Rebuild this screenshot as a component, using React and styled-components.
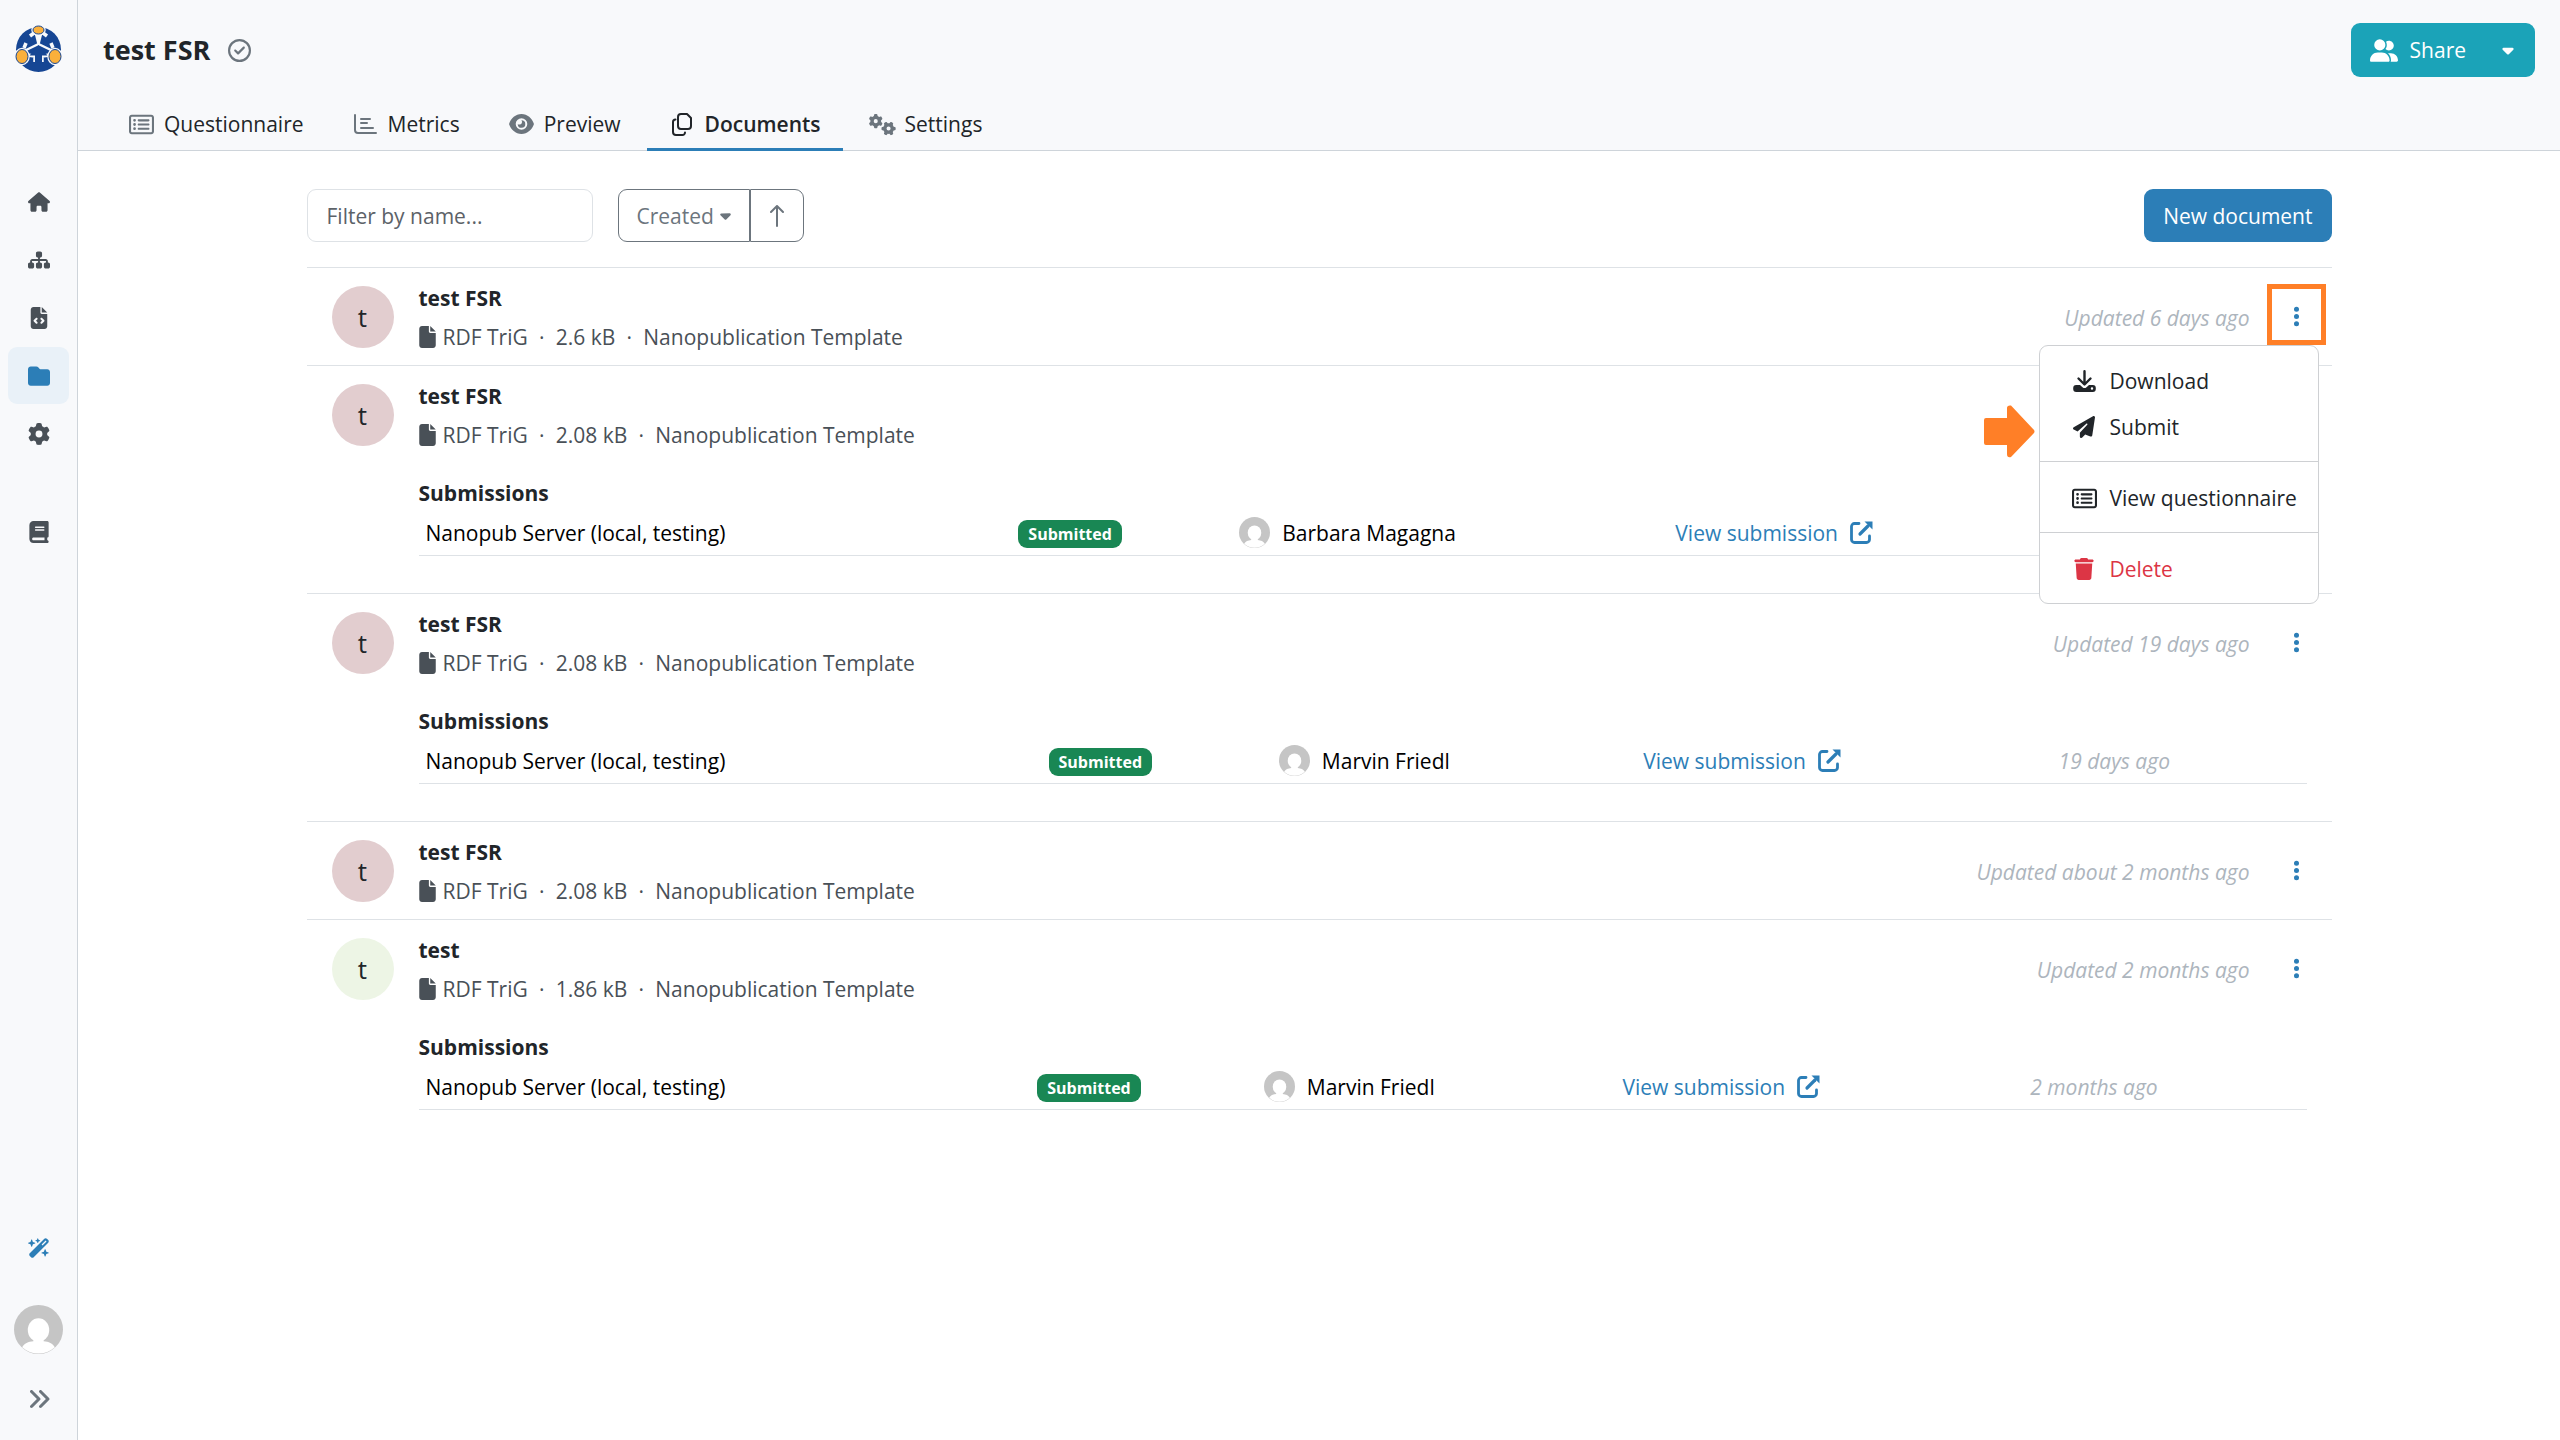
import React, { Component } from 'react';
import styled, { createGlobalStyle, css } from 'styled-components';
import {
  FaHouse,
  FaSitemap,
  FaFileCode,
  FaFolder,
  FaGear,
  FaBook,
  FaWandMagicSparkles,
  FaAnglesRight,
  FaRegCircleCheck,
  FaRegRectangleList,
  FaGears,
  FaUserGroup,
  FaCaretDown,
  FaFile,
  FaEllipsisVertical,
  FaPaperPlane,
  FaTrash,
} from 'react-icons/fa6';

const navItems = [
  { label: 'Dashboard', icon: FaHouse },
  { label: 'Knowledge models', icon: FaSitemap },
  { label: 'Document templates', icon: FaFileCode },
  { label: 'Projects', icon: FaFolder, active: true },
  { label: 'Administration', icon: FaGear },
];

const documents = [
  { name: 'test FSR', size: '2.6 kB', updated: 'Updated 6 days ago', color: '#e2cdcf' },
  {
    name: 'test FSR',
    size: '2.08 kB',
    updated: '',
    color: '#e2cdcf',
    submission: { user: 'Barbara Magagna', date: '', columns: [31.4, 11.7, 23.1, 20] },
  },
  {
    name: 'test FSR',
    size: '2.08 kB',
    updated: 'Updated 19 days ago',
    color: '#e2cdcf',
    submission: { user: 'Marvin Friedl', date: '19 days ago', columns: [33, 12.2, 19.3, 22] },
  },
  { name: 'test FSR', size: '2.08 kB', updated: 'Updated about 2 months ago', color: '#e2cdcf' },
  {
    name: 'test',
    size: '1.86 kB',
    updated: 'Updated 2 months ago',
    color: '#edf5e5',
    submission: { user: 'Marvin Friedl', date: '2 months ago', columns: [32.4, 12, 19, 21.6] },
  },
];

/* icons that the icon set draws differently */
const ChartIcon = () => (
  <svg width="23" height="20" viewBox="0 0 23 20" fill="none" stroke="currentColor" strokeWidth="2" strokeLinecap="round">
    <path d="M1 1v15a3 3 0 0 0 3 3h18M7 5h9M7 9h6M7 14h12" />
  </svg>
);

const EyeIcon = () => (
  <svg width="25" height="20" viewBox="0 0 25 20">
    <path fill="currentColor" fillRule="evenodd" d="M12.500 0C6.500 0 2 4.500 0.300 9.200a2 2 0 0 0 0 1.600C2 15.500 6.500 20 12.500 20s10.500-4.500 12.200-9.200a2 2 0 0 0 0-1.600C23 4.500 18.500 0 12.500 0zm0 4.200a5.800 5.800 0 1 1 0 11.600a5.800 5.800 0 0 1 0-11.600z" />
    <path fill="currentColor" d="M12.500 6.200a3.800 3.800 0 1 1-3.800 4c.5.200 1 .3 1.400.3a2.600 2.600 0 0 0 2.300-4.300z" />
  </svg>
);

const CopyIcon = () => (
  <svg width="20" height="23" viewBox="0 0 20 23" fill="none" stroke="currentColor" strokeWidth="2" strokeLinejoin="round" strokeLinecap="round">
    <path d="M9 1h6l4 4v8a3 3 0 0 1-3 3H9a3 3 0 0 1-3-3V4a3 3 0 0 1 3-3z" />
    <path d="M3.500 6.500A2.500 2.500 0 0 0 1 9v10a3 3 0 0 0 3 3h6.500a2.500 2.500 0 0 0 2.500-2.500" />
  </svg>
);

const DownloadIcon = () => (
  <svg width="23" height="22" viewBox="0 0 23 22">
    <path d="M11.500 1.200v12M5.500 8.500l6 6l6-6" fill="none" stroke="currentColor" strokeWidth="2.400" strokeLinecap="round" strokeLinejoin="round" />
    <path fill="currentColor" fillRule="evenodd" d="M3.200 15H7l2.500 2.200a3 3 0 0 0 4 0L16 15h3.800a3 3 0 0 1 3 3v1a3 3 0 0 1-3 3H3.200a3 3 0 0 1-3-3v-1a3 3 0 0 1 3-3zm15.800 2.300a1.200 1.200 0 1 0 0 2.400a1.200 1.200 0 0 0 0-2.400z" />
  </svg>
);

const ExternalIcon = () => (
  <svg width="23" height="23" viewBox="0 0 23 23">
    <path d="M9 2.500H4.500a3 3 0 0 0-3 3v13a3 3 0 0 0 3 3h12a3 3 0 0 0 3-3V15" fill="none" stroke="currentColor" strokeWidth="2.800" strokeLinecap="round" />
    <path d="M10 13L18 5" fill="none" stroke="currentColor" strokeWidth="3.200" strokeLinecap="round" />
    <path d="M14.500 0.500H22.500V8.500z" fill="currentColor" />
  </svg>
);

const ArrowUpIcon = () => (
  <svg width="14" height="22" viewBox="0 0 14 22" fill="none" stroke="currentColor" strokeWidth="2" strokeLinecap="round" strokeLinejoin="round">
    <path d="M7 21V1M1 7l6-6l6 6" />
  </svg>
);

const CalloutArrow = () => (
  <svg width="52" height="53" viewBox="0 0 52 53">
    <path d="M3 13h21V3q0-3 4-2.500L51 25q1 1.500 0 3L28 52q-4 1-4-3V40H3q-2 0-2-2V15q0-2 2-2z" fill="#ff7f27" />
  </svg>
);

const Logo = () => (
  <svg width="47" height="47" viewBox="0 0 47 47" role="img" aria-label="FAIR Wizard">
    <circle cx="23.500" cy="24.500" r="22.500" fill="#164694" />
    <path d="M23.500 19L7 27M23.500 19L40 27" stroke="#f8f9fb" strokeWidth="2.500" />
    <path d="M19.500 8h8L24.500 20h-2z" fill="#f8f9fb" />
    <path d="M15 11l4-3M32 11l-4-3M11 18l-2 5M36 18l2 5M12 30l8 1v6M35 30l-8 1v6" stroke="#f8f9fb" strokeWidth="3.500" fill="none" />
    <path d="M23.500 20l9 10.500H27V37h-7v-6.500h-5.500z" fill="#164694" />
    <g fill="#fbb03b" stroke="#f8f9fb" strokeWidth="3.500">
      <ellipse cx="23.500" cy="5" rx="5.500" ry="4" />
      <ellipse cx="7" cy="31.500" rx="6" ry="7" />
      <ellipse cx="40" cy="31.500" rx="6" ry="7" />
    </g>
    <g fill="#fbb03b" stroke="#164694" strokeWidth="1">
      <ellipse cx="23.500" cy="5" rx="5.500" ry="4" />
      <ellipse cx="7" cy="31.500" rx="6" ry="7" />
      <ellipse cx="40" cy="31.500" rx="6" ry="7" />
    </g>
  </svg>
);

const UserPicture = ({ size }) => (
  <svg width={size} height={size} viewBox="0 0 48 48" aria-hidden="true">
    <circle cx="24" cy="24" r="24" fill="#c5c5c5" />
    <ellipse cx="24" cy="24.500" rx="10.500" ry="11.500" fill="#fff" />
    <path d="M19 32v3.500c-5 .5-9 2-11 6A24 24 0 0 0 40 41.500c-2-4-6-5.500-11-6V32z" fill="#fff" />
  </svg>
);

class App extends Component {
  constructor(props) {
    super(props);
    this.state = {
      filter: '',
      openMenu: 0,
    };
    this.updateFilter = this.updateFilter.bind(this);
    this.toggleMenu = this.toggleMenu.bind(this);
  }

  updateFilter(event) {
    this.setState({ filter: event.target.value });
  }

  toggleMenu(index) {
    this.setState(prevState => ({ openMenu: prevState.openMenu === index ? null : index }));
  }

  renderMenu() {
    return (
      <>
        <Callout><CalloutArrow /></Callout>
        <Menu>
          <MenuGroup>
            <MenuItem type="button"><MenuIcon><DownloadIcon /></MenuIcon>Download</MenuItem>
            <MenuItem type="button"><MenuIcon><FaPaperPlane /></MenuIcon>Submit</MenuItem>
          </MenuGroup>
          <MenuGroup>
            <MenuItem type="button"><MenuIcon $size={25}><FaRegRectangleList /></MenuIcon>View questionnaire</MenuItem>
          </MenuGroup>
          <MenuGroup>
            <MenuItem type="button" $danger><MenuIcon><FaTrash /></MenuIcon>Delete</MenuItem>
          </MenuGroup>
        </Menu>
      </>
    );
  }

  renderSubmission({ user, date, columns }) {
    return (
      <Submissions>
        <Title as="h3">Submissions</Title>
        <Table>
          <colgroup>
            {columns.map((width, i) => <col key={i} style={{ width: `${width}%` }} />)}
            <col />
          </colgroup>
          <tbody>
            <tr>
              <td>Nanopub Server (local, testing)</td>
              <td><Badge>Submitted</Badge></td>
              <td><User><UserPicture size={31} />{user}</User></td>
              <td><ViewLink href="#submission">View submission<ExternalIcon /></ViewLink></td>
              <td><Muted>{date}</Muted></td>
            </tr>
          </tbody>
        </Table>
      </Submissions>
    );
  }

  render() {
    const { filter, openMenu } = this.state;
    const visible = documents.filter(d => d.name.toLowerCase().includes(filter.toLowerCase()));

    return (
      <Page>
        <GlobalStyle />
        <Sidebar>
          <Logo />
          <Nav>
            {navItems.map(({ label, icon: Icon, active }) => (
              <NavLink key={label} href="#nav" aria-label={label} $active={active}><Icon /></NavLink>
            ))}
          </Nav>
          <NavLink href="#guide" aria-label="Guide"><FaBook /></NavLink>
          <SidebarBottom>
            <NavLink href="#appearance" aria-label="Appearance" $accent><FaWandMagicSparkles /></NavLink>
            <Profile type="button" aria-label="Profile"><UserPicture size={49} /></Profile>
            <Expand type="button" aria-label="Expand"><FaAnglesRight /></Expand>
          </SidebarBottom>
        </Sidebar>

        <Main>
          <Header>
            <TitleBar>
              <Heading>test FSR</Heading>
              <FaRegCircleCheck />
              <ShareGroup>
                <ShareButton type="button"><FaUserGroup />Share</ShareButton>
                <ShareToggle type="button" aria-label="Share options"><FaCaretDown /></ShareToggle>
              </ShareGroup>
            </TitleBar>
            <Tabs>
              <Tab href="#questionnaire"><TabIcon $size={25}><FaRegRectangleList /></TabIcon>Questionnaire</Tab>
              <Tab href="#metrics"><TabIcon><ChartIcon /></TabIcon>Metrics</Tab>
              <Tab href="#preview"><TabIcon><EyeIcon /></TabIcon>Preview</Tab>
              <Tab href="#documents" $active><TabIcon><CopyIcon /></TabIcon>Documents</Tab>
              <Tab href="#settings"><TabIcon $size={27}><FaGears /></TabIcon>Settings</Tab>
            </Tabs>
          </Header>

          <Content>
            <Toolbar>
              <Filter aria-label="Filter by name" placeholder="Filter by name..." value={filter} onChange={this.updateFilter} />
              <SortGroup>
                <SortButton type="button">Created<FaCaretDown /></SortButton>
                <SortButton type="button" aria-label="Sort direction"><ArrowUpIcon /></SortButton>
              </SortGroup>
              <NewButton type="button">New document</NewButton>
            </Toolbar>

            {visible.map((doc, index) => (
              <Row key={index}>
                <Avatar $color={doc.color}>{doc.name[0]}</Avatar>
                <Info>
                  <Summary>
                    <div>
                      <Title>{doc.name}</Title>
                      <Description>
                        <FaFile />
                        <span>RDF TriG</span><Dot>·</Dot>
                        <span>{doc.size}</span><Dot>·</Dot>
                        <span>Nanopublication Template</span>
                      </Description>
                    </div>
                    <Actions>
                      <Muted>{doc.updated}</Muted>
                      <Kebab
                        type="button"
                        aria-label="Actions"
                        $marked={openMenu === index}
                        onClick={() => this.toggleMenu(index)}
                      >
                        <FaEllipsisVertical />
                      </Kebab>
                      {openMenu === index && this.renderMenu()}
                    </Actions>
                  </Summary>
                  {doc.submission && this.renderSubmission(doc.submission)}
                </Info>
              </Row>
            ))}
          </Content>
        </Main>
      </Page>
    );
  }
}

const GlobalStyle = createGlobalStyle`
  * {
    box-sizing: border-box;
  }
  body {
    margin: 0;
    background: #fff;
    color: #212529;
    font-family: "Open Sans", "Noto Sans", sans-serif;
    font-size: 21px;
    line-height: 30px;
  }
  button, input {
    font: inherit;
    color: inherit;
    margin: 0;
  }
  button {
    cursor: pointer;
  }
  a {
    text-decoration: none;
  }
  svg {
    flex: none;
    display: block;
  }
`;

const Page = styled.div`
  display: flex;
  min-height: 100vh;
`;

const Sidebar = styled.aside`
  flex: none;
  width: 78px;
  display: flex;
  flex-direction: column;
  align-items: center;
  padding: 25px 0 13px;
  background: #f8f9fb;
  border-right: 1px solid #ced4da;
`;

const Nav = styled.nav`
  display: flex;
  flex-direction: column;
  gap: 1px;
  margin: 101px 0 41px;
`;

const NavLink = styled.a`
  display: flex;
  align-items: center;
  justify-content: center;
  width: 61px;
  height: 57px;
  border-radius: 9px;
  color: #495057;
  ${({ $active }) => $active && css`
    color: #2c7eb7;
    background: #e9f1f8;
  `}
  ${({ $accent }) => $accent && css`
    color: #2c7eb7;
  `}

  svg {
    width: auto;
    height: 22px;
  }
`;

const SidebarBottom = styled.div`
  display: flex;
  flex-direction: column;
  align-items: center;
  margin-top: auto;
`;

const Profile = styled.button`
  padding: 0;
  border: 0;
  background: none;
  margin: 29px 0 16px;
`;

const Expand = styled.button`
  display: flex;
  align-items: center;
  justify-content: center;
  width: 61px;
  height: 57px;
  padding: 0;
  border: 0;
  background: none;
  font-size: 24px;
  color: #6c757d;
`;

const Main = styled.main`
  flex: 1;
  min-width: 0;
`;

const Header = styled.header`
  background: #f8f9fb;
  border-bottom: 1px solid #ced4da;
`;

const TitleBar = styled.div`
  display: flex;
  align-items: center;
  gap: 18px;
  height: 100px;
  padding: 0 25px;
  color: #6c757d;
  font-size: 23px;
`;

const Heading = styled.h1`
  margin: 0;
  font-size: 27px;
  font-weight: 700;
  color: #212529;
`;

const ShareGroup = styled.div`
  display: flex;
  margin-left: auto;
  height: 54px;
  border-radius: 9px;
  overflow: hidden;
  background: #1ba3b8;
`;

const ShareButton = styled.button`
  display: flex;
  align-items: center;
  gap: 12px;
  padding: 0 15px 0 19px;
  border: 0;
  background: none;
  color: #fff;
  font-size: 21px;

  svg {
    width: 28px;
    height: 23px;
  }
`;

const ShareToggle = styled.button`
  padding: 0 18px;
  border: 0;
  background: none;
  color: #fff;
  font-size: 18px;
`;

const Tabs = styled.nav`
  display: flex;
  gap: 4px;
  height: 50px;
  padding: 0 28px;
`;

const Tab = styled.a`
  display: flex;
  align-items: center;
  gap: 9px;
  padding: 0 22px;
  height: 51px;
  border-bottom: 3px solid transparent;
  color: #212529;
  ${({ $active }) => $active && css`
    font-weight: 600;
    border-color: #2c7eb7;
  `}

  span {
    color: ${({ $active }) => ($active ? '#212529' : '#6c757d')};
  }
`;

const TabIcon = styled.span`
  display: flex;
  justify-content: center;
  width: 27px;
  font-size: ${({ $size }) => $size || 22}px;
`;

const Content = styled.div`
  max-width: 2025px;
  margin: 0 auto;
  padding-top: 38px;
`;

const Toolbar = styled.div`
  display: flex;
  gap: 25px;
  height: 53px;
  margin-bottom: 25px;
`;

const Filter = styled.input`
  width: 286px;
  padding: 0 19px;
  border: 1px solid #dee2e6;
  border-radius: 9px;
  background: #fff;

  &::placeholder {
    color: #5c6268;
    opacity: 1;
  }
`;

const SortGroup = styled.div`
  display: flex;
`;

const SortButton = styled.button`
  display: flex;
  align-items: center;
  gap: 6px;
  padding: 0 18px;
  border: 1px solid #6c757d;
  background: #fff;
  color: #6c757d;

  &:first-child {
    border-radius: 9px 0 0 9px;
  }
  &:first-child svg {
    width: 11px;
    height: 17px;
  }
  &:last-child {
    padding: 0 19px;
    border-radius: 0 9px 9px 0;
  }
`;

const NewButton = styled.button`
  margin-left: auto;
  padding: 0 19px;
  border: 0;
  border-radius: 9px;
  background: #2c7eb7;
  color: #fff;
`;

const Row = styled.article`
  display: flex;
  gap: 25px;
  padding: 11px 25px 8px;
  border-top: 1px solid #dee2e6;
`;

const Avatar = styled.div`
  flex: none;
  display: flex;
  align-items: center;
  justify-content: center;
  width: 62px;
  height: 62px;
  margin-top: 7px;
  border-radius: 50%;
  background: ${({ $color }) => $color};
  font-size: 26px;
`;

const Info = styled.div`
  flex: 1;
  min-width: 0;
`;

const Summary = styled.div`
  display: flex;
  justify-content: space-between;
`;

const Title = styled.h2`
  margin: 0;
  font-size: 21px;
  line-height: 38px;
  font-weight: 700;
`;

const Description = styled.div`
  display: flex;
  align-items: center;
  height: 40px;
  color: #495057;

  svg {
    width: 17px;
    height: 22px;
    margin-right: 7px;
  }
`;

const Dot = styled.span`
  width: 28px;
  text-align: center;
`;

const Actions = styled.div`
  position: relative;
  display: flex;
  align-items: center;
  gap: 17px;
`;

const Muted = styled.span`
  color: #adb5bd;
  font-style: italic;
`;

const Kebab = styled.button`
  align-self: flex-start;
  display: flex;
  align-items: center;
  justify-content: center;
  width: 59px;
  height: 61px;
  margin: 5px -19px 0 0;
  padding: 4px 0 0;
  border: 5px solid ${({ $marked }) => ($marked ? '#ff7f27' : 'transparent')};
  background: none;
  color: #2c7eb7;
  font-size: 23px;
`;

const Menu = styled.div`
  position: absolute;
  z-index: 1;
  top: 66px;
  right: -12px;
  width: 280px;
  border: 1px solid #ced0d3;
  border-radius: 9px;
  background: #fff;
`;

const MenuGroup = styled.div`
  padding: 12px 0;

  &:first-child {
    padding-top: 11px;
  }
  & + & {
    border-top: 1px solid #ced0d3;
  }
`;

const MenuItem = styled.button`
  display: flex;
  align-items: center;
  gap: 12px;
  width: 100%;
  height: 46px;
  padding: 2px 0 0 31px;
  border: 0;
  background: none;
  text-align: left;
  white-space: nowrap;
  color: ${({ $danger }) => ($danger ? '#dc3545' : '#212529')};
`;

const MenuIcon = styled.span`
  display: flex;
  justify-content: center;
  width: 27px;
  font-size: ${({ $size }) => $size || 22}px;
`;

const Callout = styled.div`
  position: absolute;
  z-index: 1;
  top: 126px;
  right: 272px;
`;

const Submissions = styled.section`
  margin: 19px 0 29px;
`;

const Table = styled.table`
  width: 100%;
  table-layout: fixed;
  border-spacing: 0;
  border-bottom: 1px solid #dee2e6;
  color: #000;

  td {
    height: 43px;
    padding: 0 7px 2px;
    white-space: nowrap;
  }
`;

const Badge = styled.span`
  display: inline-block;
  padding: 0 10px;
  border-radius: 9px;
  background: #198754;
  color: #fff;
  font-size: 16px;
  line-height: 28px;
  font-weight: 700;
  vertical-align: middle;
`;

const User = styled.div`
  display: flex;
  align-items: center;
  gap: 12px;
`;

const ViewLink = styled.a`
  display: flex;
  align-items: center;
  gap: 12px;
  color: #2c7eb7;
`;

export default App;
